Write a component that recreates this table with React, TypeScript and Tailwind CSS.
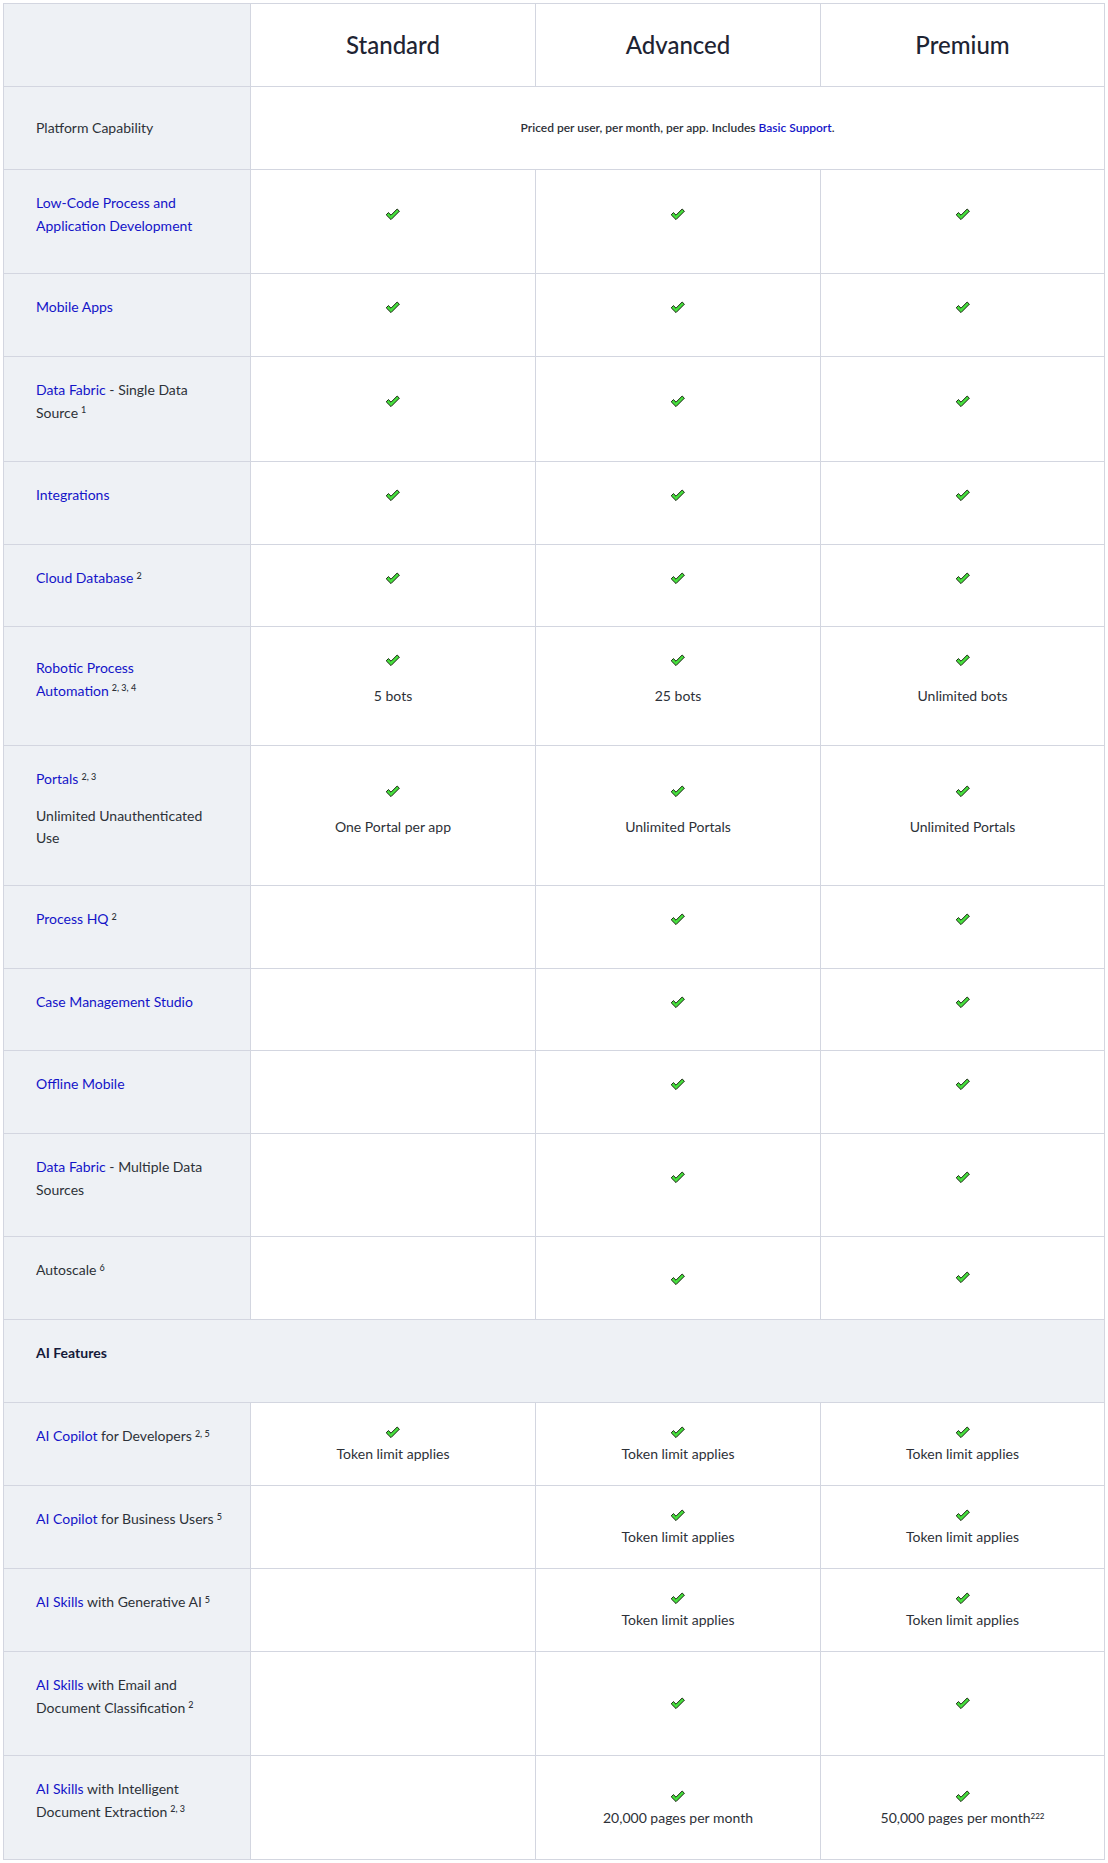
import React from "react";

const A = ({ children }: { children: React.ReactNode }) => (
  <a href="#" className="text-[#1414c8]">
    {children}
  </a>
);

const Sup = ({ children }: { children: React.ReactNode }) => (
  <sup className="ml-[3px] text-[9px] font-medium">{children}</sup>
);

const Check = () => (
  <svg width="16" height="13" viewBox="0 0 16 13">
    <path
      d="M1.2 6.8 L3.4 4.6 L6 7.2 L12.2 1 L14.4 3.2 L6 11.6 Z"
      fill="#45e03c"
      stroke="#18230f"
      strokeWidth="1"
      strokeLinejoin="miter"
    />
  </svg>
);

type Val = null | { pt: string; text?: React.ReactNode; gap?: string };

type Row = {
  h: string;
  labelPt: string;
  label: React.ReactNode;
  vals: Val[];
};

const one: Val = { pt: "pt-[22px]" };
const two: Val = { pt: "pt-[33px]" };
const tok: Val = { pt: "pt-[18px]", text: "Token limit applies" };

const rows: Row[] = [
  {
    h: "h-[103px]",
    labelPt: "pt-[22px]",
    label: (
      <A>
        Low-Code Process and
        <br />
        Application Development
      </A>
    ),
    vals: [two, two, two],
  },
  { h: "h-[82px]", labelPt: "pt-[22px]", label: <A>Mobile Apps</A>, vals: [one, one, one] },
  {
    h: "h-[104px]",
    labelPt: "pt-[22px]",
    label: (
      <>
        <A>Data Fabric</A> - Single Data
        <br />
        Source<Sup>1</Sup>
      </>
    ),
    vals: [two, two, two],
  },
  { h: "h-[82px]", labelPt: "pt-[22px]", label: <A>Integrations</A>, vals: [one, one, one] },
  {
    h: "h-[81px]",
    labelPt: "pt-[22px]",
    label: (
      <>
        <A>Cloud Database</A>
        <Sup>2</Sup>
      </>
    ),
    vals: [one, one, one],
  },
  {
    h: "h-[118px]",
    labelPt: "pt-[30px]",
    label: (
      <>
        <A>
          Robotic Process
          <br />
          Automation
        </A>
        <Sup>2, 3, 4</Sup>
      </>
    ),
    vals: [
      { pt: "pt-[22px]", text: "5 bots", gap: "mt-[14px]" },
      { pt: "pt-[22px]", text: "25 bots", gap: "mt-[14px]" },
      { pt: "pt-[22px]", text: "Unlimited bots", gap: "mt-[14px]" },
    ],
  },
  {
    h: "h-[139px]",
    labelPt: "pt-[22px]",
    label: (
      <>
        <p>
          <A>Portals</A>
          <Sup>2, 3</Sup>
        </p>
        <p className="mt-[14px]">
          Unlimited Unauthenticated
          <br />
          Use
        </p>
      </>
    ),
    vals: [
      { pt: "pt-[34px]", text: "One Portal per app", gap: "mt-[14px]" },
      { pt: "pt-[34px]", text: "Unlimited Portals", gap: "mt-[14px]" },
      { pt: "pt-[34px]", text: "Unlimited Portals", gap: "mt-[14px]" },
    ],
  },
  {
    h: "h-[82px]",
    labelPt: "pt-[22px]",
    label: (
      <>
        <A>Process HQ</A>
        <Sup>2</Sup>
      </>
    ),
    vals: [null, one, one],
  },
  { h: "h-[81px]", labelPt: "pt-[22px]", label: <A>Case Management Studio</A>, vals: [null, one, one] },
  { h: "h-[82px]", labelPt: "pt-[22px]", label: <A>Offline Mobile</A>, vals: [null, one, one] },
  {
    h: "h-[102px]",
    labelPt: "pt-[22px]",
    label: (
      <>
        <A>Data Fabric</A> - Multiple Data
        <br />
        Sources
      </>
    ),
    vals: [null, { pt: "pt-[32px]" }, { pt: "pt-[32px]" }],
  },
  {
    h: "h-[82px]",
    labelPt: "pt-[22px]",
    label: (
      <>
        Autoscale<Sup>6</Sup>
      </>
    ),
    vals: [null, { pt: "pt-[31px]" }, { pt: "pt-[29px]" }],
  },
];

const aiRows: Row[] = [
  {
    h: "h-[82px]",
    labelPt: "pt-[22px]",
    label: (
      <>
        <A>AI Copilot</A> for Developers<Sup>2, 5</Sup>
      </>
    ),
    vals: [tok, tok, tok],
  },
  {
    h: "h-[82px]",
    labelPt: "pt-[22px]",
    label: (
      <>
        <A>AI Copilot</A> for Business Users<Sup>5</Sup>
      </>
    ),
    vals: [null, tok, tok],
  },
  {
    h: "h-[82px]",
    labelPt: "pt-[22px]",
    label: (
      <>
        <A>AI Skills</A> with Generative AI<Sup>5</Sup>
      </>
    ),
    vals: [null, tok, tok],
  },
  {
    h: "h-[103px]",
    labelPt: "pt-[22px]",
    label: (
      <>
        <A>AI Skills</A> with Email and
        <br />
        Document Classification<Sup>2</Sup>
      </>
    ),
    vals: [null, { pt: "pt-[40px]" }, { pt: "pt-[40px]" }],
  },
  {
    h: "h-[103px]",
    labelPt: "pt-[22px]",
    label: (
      <>
        <A>AI Skills</A> with Intelligent
        <br />
        Document Extraction<Sup>2, 3</Sup>
      </>
    ),
    vals: [
      null,
      { pt: "pt-[29px]", text: "20,000 pages per month" },
      {
        pt: "pt-[29px]",
        text: (
          <>
            50,000 pages per month<sup className="text-[8px] font-medium">222</sup>
          </>
        ),
      },
    ],
  },
];

const ValueCell = ({ v, h }: { v: Val; h: string }) => (
  <div className={`${h} bg-white`}>
    {v && (
      <div className={`flex flex-col items-center ${v.pt}`}>
        <div className="flex h-[22px] items-center justify-center">
          <Check />
        </div>
        {v.text && <p className={`text-center ${v.gap ?? ""}`}>{v.text}</p>}
      </div>
    )}
  </div>
);

const FeatureRow = ({ row }: { row: Row }) => (
  <>
    <div className={`${row.h} bg-[#eef1f5] pl-[32px] pr-[12px] ${row.labelPt}`}>
      <div>{row.label}</div>
    </div>
    {row.vals.map((v, i) => (
      <ValueCell key={i} v={v} h={row.h} />
    ))}
  </>
);

export default function App() {
  return (
    <div
      className="min-h-[1863px] w-[1108px] bg-white pl-[3px] pt-[3px] text-[14px] leading-[22.5px] text-[#2d3138]"
      style={{ fontFamily: "Lato, 'Noto Sans', Arial, sans-serif" }}
    >
      <div className="grid w-[1102px] grid-cols-[246px_284px_284px_283px] gap-px border border-[#d3d6e0] bg-[#d3d6e0]">
        {/* header */}
        <div className="h-[82px] bg-[#eef1f5]" />
        {["Standard", "Advanced", "Premium"].map((t) => (
          <div
            key={t}
            className="flex h-[82px] items-center justify-center bg-white text-[24px] font-medium text-[#1e2433]"
          >
            {t}
          </div>
        ))}

        {/* platform */}
        <div className="flex h-[82px] items-center bg-[#eef1f5] pl-[32px]">Platform Capability</div>
        <div className="col-span-3 flex h-[82px] items-center justify-center bg-white text-[12px] font-semibold text-[#2d3138]">
          <span>
            Priced per user, per month, per app. Includes <A>Basic Support</A>.
          </span>
        </div>

        {rows.map((r, i) => (
          <FeatureRow key={i} row={r} />
        ))}

        <div className="col-span-4 h-[82px] bg-[#eef1f5] pl-[32px] pt-[22px] font-bold text-[#151a3a]">
          AI Features
        </div>

        {aiRows.map((r, i) => (
          <FeatureRow key={i} row={r} />
        ))}
      </div>
    </div>
  );
}
